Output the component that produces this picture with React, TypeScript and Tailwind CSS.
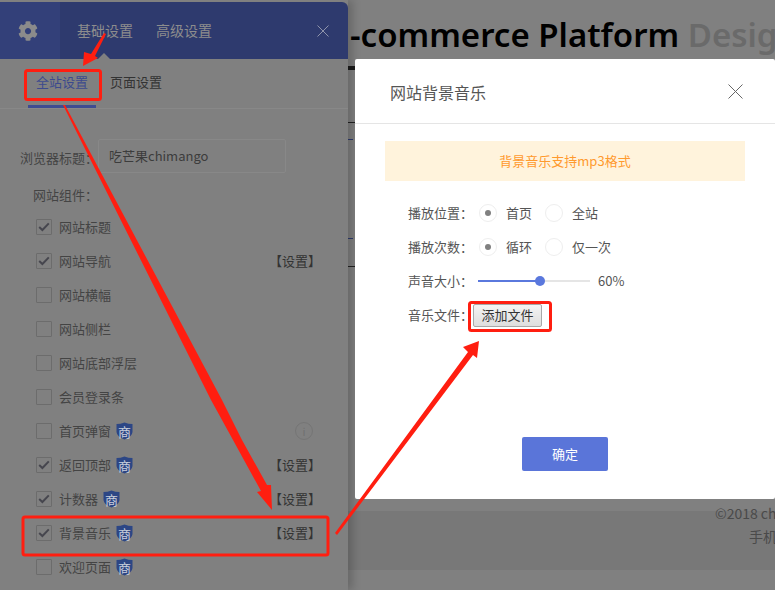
import { FaCog } from "react-icons/fa";

const cjk = { fontFamily: '"Noto Sans CJK SC", "Noto Sans", sans-serif' };

type Row = { label: string; checked?: boolean; badge?: boolean; setting?: boolean; info?: boolean };
const rows: Row[] = [
  { label: "网站标题", checked: true },
  { label: "网站导航", checked: true, setting: true },
  { label: "网站横幅" },
  { label: "网站侧栏" },
  { label: "网站底部浮层" },
  { label: "会员登录条" },
  { label: "首页弹窗", badge: true, info: true },
  { label: "返回顶部", checked: true, badge: true, setting: true },
  { label: "计数器", checked: true, badge: true, setting: true },
  { label: "背景音乐", checked: true, badge: true, setting: true },
  { label: "欢迎页面", badge: true },
];

function Badge() {
  return (
    <span className="relative ml-[5px] flex h-[18px] w-[17px] items-center justify-center">
      <svg width="17" height="18" viewBox="0 0 17 18" className="absolute inset-0">
        <path d="M0.5 2 Q4.5 2 8.5 0.5 Q12.5 2 16.5 2 V10 Q16 15 8.5 17.5 Q1 15 0.5 10 Z" fill="#2c4685" />
      </svg>
      <span className="relative text-[13px] leading-none text-[#c9cfdc]">商</span>
    </span>
  );
}

function Check({ on }: { on?: boolean }) {
  return (
    <span className="flex h-[16px] w-[16px] shrink-0 items-center justify-center rounded-[1px] border border-[#6c6c6c]">
      {on && (
        <svg width="12" height="10" viewBox="0 0 12 10">
          <path d="M1.2 5 L4.4 8 L10.8 1.4" fill="none" stroke="#46464e" strokeWidth="2" />
        </svg>
      )}
    </span>
  );
}

function Radio({ on, label, width }: { on?: boolean; label: string; width: string }) {
  return (
    <span className={`flex items-center ${width}`}>
      <span className="flex h-[18px] w-[18px] items-center justify-center rounded-full border border-[#eeeeee]">
        {on && <span className="h-[6px] w-[6px] rounded-full bg-[#808080]" />}
      </span>
      <span className="ml-[9px] text-[13px] text-[#555555]">{label}</span>
    </span>
  );
}

function Panel() {
  return (
    <aside className="relative z-10 h-full w-[348px] shrink-0 bg-[#808080] pt-[2px] shadow-[5px_0_8px_rgba(0,0,0,0.18)]">
      <header className="relative flex h-[57px] items-center rounded-tr-[6px] bg-[#2e3a6e]">
        <div className="flex h-full w-[60px] items-center justify-center bg-[#334079] pr-[4px] pt-[1px]">
          <FaCog size={20} color="#8b8b8b" />
        </div>
        <span className="ml-[17px] text-[14px] text-[#8d8d8d]">基础设置</span>
        <span className="ml-[23px] text-[14px] text-[#8d8d8d]">高级设置</span>
        <svg width="12" height="12" viewBox="0 0 12 12" className="ml-auto mr-[19px]">
          <path d="M0.5 0.5 L11.5 11.5 M11.5 0.5 L0.5 11.5" stroke="#8f94ab" strokeWidth="1" />
        </svg>
        <span className="absolute bottom-0 left-[98px] h-0 w-0 border-x-[6px] border-b-[6px] border-x-transparent border-b-[#808080]" />
      </header>
      <nav className="flex h-[50px] border-b border-[#888888] pl-[28px] text-[13px]">
        <span className="flex w-[68px] items-center justify-center border-b-[3px] border-[#3e4c92] text-[#3c4a8e]">全站设置</span>
        <span className="ml-[14px] flex items-center pb-[3px] text-[#333333]">页面设置</span>
      </nav>
      <div className="flex items-center pl-[20px] pt-[30px] text-[13px] text-[#444444]">
        <span className="w-[78px] pt-[3px]">浏览器标题：</span>
        <div className="flex h-[34px] w-[188px] items-center rounded-[2px] border border-[#888888] pl-[10px] text-[#3c3c3c]">吃芒果chimango</div>
      </div>
      <div className="pl-[33px] pt-[12px] text-[13px] leading-[20px] text-[#444444]">网站组件：</div>
      <ul className="mt-[5px] pl-[36px] pr-[27px] text-[13px] text-[#444444]">
        {rows.map((r) => (
          <li key={r.label} className="flex h-[34px] items-center">
            <Check on={r.checked} />
            <span className="ml-[7px]">{r.label}</span>
            {r.badge && <Badge />}
            {r.setting && <span className="ml-auto text-[#333333]">【设置】</span>}
            {r.info && (
              <span className="ml-auto mr-[8px] flex h-[18px] w-[18px] items-center justify-center rounded-full border border-[#757575] text-[11px] text-[#707070]">i</span>
            )}
          </li>
        ))}
      </ul>
    </aside>
  );
}

function Modal() {
  return (
    <section className="absolute left-[7px] top-[59px] z-20 flex h-[440px] w-[420px] flex-col rounded-[2px] bg-white">
      <div className="flex h-[65px] items-center justify-between border-b border-[#e5e5e5] pl-[35px] pr-[32px]">
        <span className="pt-[2px] text-[16px] text-[#555555]">网站背景音乐</span>
        <svg width="15" height="15" viewBox="0 0 15 15">
          <path d="M0.5 0.5 L14.5 14.5 M14.5 0.5 L0.5 14.5" stroke="#666666" strokeWidth="1" />
        </svg>
      </div>
      <div className="mx-[30px] mt-[17px] flex h-[40px] items-center justify-center bg-[#fff3dc] text-[13px] text-[#ff9a2e]">背景音乐支持mp3格式</div>
      <div className="flex flex-col pl-[53px] pt-[15px] text-[13px] text-[#555555]">
        <div className="flex h-[34px] items-center">
          <span className="w-[72px]">播放位置：</span>
          <span className="ml-[-1px]"><Radio on label="首页" width="w-[66px]" /></span>
          <Radio label="全站" width="w-[80px]" />
        </div>
        <div className="flex h-[34px] items-center">
          <span className="w-[72px]">播放次数：</span>
          <span className="ml-[-1px]"><Radio on label="循环" width="w-[66px]" /></span>
          <Radio label="仅一次" width="w-[80px]" />
        </div>
        <div className="flex h-[34px] items-center">
          <span className="w-[70px]">声音大小：</span>
          <div className="relative h-[2px] w-[112px] bg-[#e5e5e5]">
            <div className="h-full w-[62px] bg-[#5a78dd]" />
            <span className="absolute left-[57px] top-[-4px] h-[10px] w-[10px] rounded-full bg-[#5a78dd]" />
          </div>
          <span className="ml-[8px] text-[#555555]">60%</span>
        </div>
        <div className="flex h-[34px] items-center">
          <span className="w-[65px]">音乐文件：</span>
          <button className="flex h-[23px] w-[69px] items-center justify-center rounded-[2px] border border-[#a8a8a8] bg-gradient-to-b from-[#f4f4f4] to-[#dedede] text-[13px] text-[#333333]">添加文件</button>
        </div>
      </div>
      <button className="mx-auto mt-[105px] flex h-[34px] w-[86px] items-center justify-center rounded-[2px] bg-[#5a75d9] text-[13px] text-white">确定</button>
    </section>
  );
}

function Annotations() {
  const red = "#ff1e10";
  return (
    <svg width="775" height="590" viewBox="0 0 775 590" className="pointer-events-none absolute left-0 top-0 z-30">
      <rect x="25.5" y="70.5" width="75" height="29" rx="2" fill="none" stroke={red} strokeWidth="3" />
      <rect x="23" y="517" width="305" height="38" rx="2" fill="none" stroke={red} strokeWidth="3" />
      <rect x="469.5" y="302.5" width="81" height="28" rx="2" fill="none" stroke={red} strokeWidth="3" />
      <polygon points="104,33 106,34 95,56 98,58 83,66 84,52 91,54" fill={red} />
      <polygon points="63,105 65,105 222,400 242,440 267,485 271,485 272,510 257,492 261,491 233,440 211,400" fill={red} />
      <polygon points="335,533 468,352 463,347 479,341 477,358 473,355 337,535" fill={red} />
    </svg>
  );
}

export default function App() {
  return (
    <div className="relative flex h-[590px] w-[775px] overflow-hidden bg-[#808080]" style={cjk}>
      <Panel />
      <main className="relative flex h-full min-w-0 flex-1 flex-col overflow-hidden">
        <h1 className="mt-[12px] h-[46px] whitespace-nowrap pl-[2px] text-[33px] font-semibold leading-[46px] text-black" style={{ fontFamily: '"Noto Sans", sans-serif' }}>
          -commerce Platform <span className="text-[#6a6a6a]">Design</span>
        </h1>
        <div className="mt-[8px] h-[4px] bg-[#1c1c1c]" />
        <div className="mt-[52px] h-px bg-[#222222]" />
        <div className="mt-[16px] h-px w-[5px] bg-[#2e3a6e]" />
        <div className="mt-[98px] h-px w-[5px] bg-[#2e3a6e]" />
        <div className="mt-[27px] h-px bg-[#222222]" />
        <footer className="mt-[244px] flex h-[59px] flex-col bg-[#787878] text-[14px] leading-[23px] text-[#4a4a4a]">
          <span className="-mt-[9px] ml-[367px] whitespace-nowrap">©2018 chimango</span>
          <span className="ml-[401px] whitespace-nowrap">手机版</span>
        </footer>
        <Modal />
      </main>
      <Annotations />
    </div>
  );
}
